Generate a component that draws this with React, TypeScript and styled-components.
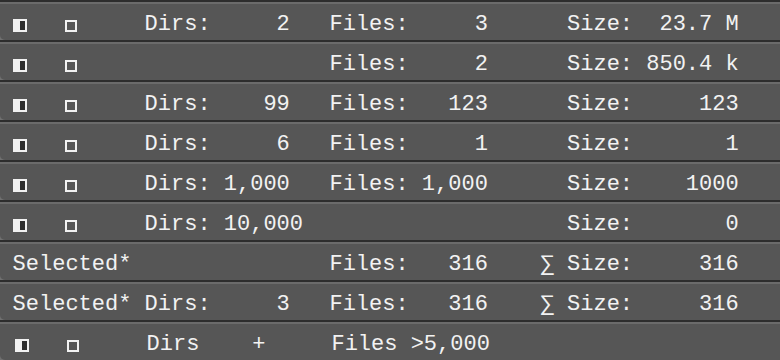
import React from "react";
import styled, { createGlobalStyle } from "styled-components";

const Global = createGlobalStyle`
  html, body { margin: 0; padding: 0; background: #707070; }
  #root { width: 780px; }
`;

const List = styled.div`
  width: 780px;
  display: flex;
  flex-direction: column;
  font-family: "Liberation Mono", "DejaVu Sans Mono", monospace;
  font-size: 22px;
  color: #f2f2f2;
`;

const Row = styled.div<{ $shift?: number }>`
  box-sizing: border-box;
  height: 40px;
  display: grid;
  grid-template-columns: 10ch 14ch 16ch 2ch 13ch;
  align-items: center;
  padding: 8px 0 0 ${(p) => 12.6 + (p.$shift ?? 0)}px;
  background: #565656;
  border-top: 2px solid #2d2d2d;
  box-shadow: inset 0 2px 0 #6b6b6b;
  border-bottom-left-radius: 5px;
  white-space: pre;
  line-height: 26px;
`;

const Lead = styled.div`
  display: flex;
  align-items: center;
`;

const IconSlot = styled.span<{ $w: number }>`
  display: inline-flex;
  width: ${(p) => p.$w}ch;
  align-items: center;
`;

const HalfSquare = styled.span`
  box-sizing: border-box;
  display: block;
  width: 14px;
  height: 13px;
  border: 2px solid #f2f2f2;
  background: linear-gradient(to right, #f2f2f2 0 50%, #2e2e2e 50% 100%);
  margin-top: 1px;
`;

const Square = styled.span`
  box-sizing: border-box;
  display: block;
  width: 12px;
  height: 12px;
  border: 2px solid #f2f2f2;
  margin-top: 2px;
`;

const Stat = styled.div`
  display: flex;
`;

const Label = styled.span``;

const Value = styled.span<{ $w: number }>`
  margin-left: 1ch;
  min-width: ${(p) => p.$w}ch;
  text-align: right;
`;

const Gap = styled.span<{ $w: number }>`
  display: inline-block;
  width: ${(p) => p.$w}ch;
`;

type RowData = {
  lead?: string;
  dirs?: string;
  files?: string;
  size?: string;
  sigma?: boolean;
};

const rows: RowData[] = [
  { dirs: "2", files: "3", size: "23.7 M" },
  { files: "2", size: "850.4 k" },
  { dirs: "99", files: "123", size: "123" },
  { dirs: "6", files: "1", size: "1" },
  { dirs: "1,000", files: "1,000", size: "1000" },
  { dirs: "10,000", size: "0" },
  { lead: "Selected*", files: "316", size: "316", sigma: true },
  { lead: "Selected*", dirs: "3", files: "316", size: "316", sigma: true },
];

const Icons = () => (
  <Lead>
    <IconSlot $w={4}>
      <HalfSquare />
    </IconSlot>
    <IconSlot $w={4}>
      <Square />
    </IconSlot>
  </Lead>
);

export default function App() {
  return (
    <>
      <Global />
      <List>
        {rows.map((r, i) => (
          <Row key={i}>
            {r.lead ? <Lead>{r.lead}</Lead> : <Icons />}
            <Stat>
              {r.dirs !== undefined && (
                <>
                  <Label>Dirs:</Label>
                  <Value $w={5}>{r.dirs}</Value>
                </>
              )}
            </Stat>
            <Stat>
              {r.files !== undefined && (
                <>
                  <Label>Files:</Label>
                  <Value $w={5}>{r.files}</Value>
                </>
              )}
            </Stat>
            <Stat>{r.sigma ? "∑" : ""}</Stat>
            <Stat>
              <Label>Size:</Label>
              <Value $w={7}>{r.size}</Value>
            </Stat>
          </Row>
        ))}
        <Row $shift={2}>
          <Icons />
          <Stat>
            <Label>Dirs</Label>
            <Gap $w={4} />
            <Label>+</Label>
          </Stat>
          <Stat>
            <Label>Files &gt;5,000</Label>
          </Stat>
        </Row>
      </List>
    </>
  );
}
